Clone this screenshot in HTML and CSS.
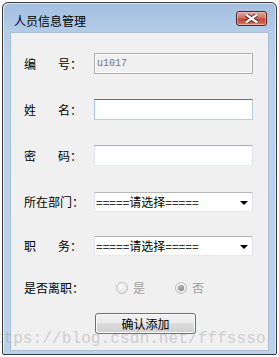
FILE: index.html
```html
<!DOCTYPE html>
<html lang="zh">
<head>
<meta charset="utf-8">
<title>人员信息管理</title>
<link rel="stylesheet" href="styles.css">
</head>
<body>
<div class="window">
  <div class="titlebar">
    <span class="title">人员信息管理</span>
    <button class="close" type="button" aria-label="关闭">
      <svg width="13" height="9" viewBox="0 0 13 9">
        <path d="M1.5 1 L11.5 8 M11.5 1 L1.5 8" stroke="#5a2a2a" stroke-width="4" stroke-linecap="square"/>
        <path d="M1.5 1 L11.5 8 M11.5 1 L1.5 8" stroke="#ffffff" stroke-width="2.2" stroke-linecap="square"/>
      </svg>
    </button>
  </div>
  <div class="client">
    <div class="row r1">
      <label class="lbl two"><span>编</span><span>号：</span></label>
      <div class="field disabled">u1017</div>
    </div>
    <div class="row r2">
      <label class="lbl two"><span>姓</span><span>名：</span></label>
      <div class="field focused"></div>
    </div>
    <div class="row r3">
      <label class="lbl two"><span>密</span><span>码：</span></label>
      <div class="field"></div>
    </div>
    <div class="row r4 sel">
      <label class="lbl">所在部门：</label>
      <div class="select"><span>=====请选择=====</span><i class="arrow"></i></div>
    </div>
    <div class="row r5 sel">
      <label class="lbl two"><span>职</span><span>务：</span></label>
      <div class="select"><span>=====请选择=====</span><i class="arrow"></i></div>
    </div>
    <div class="row r6">
      <label class="lbl">是否离职：</label>
      <div class="radios">
        <span class="radio"><i class="dot"></i>是</span>
        <span class="radio checked"><i class="dot"></i>否</span>
      </div>
    </div>
    <div class="row r7">
      <span class="lbl"></span>
      <button class="btn" type="button">确认添加</button>
    </div>
  </div>
</div>
<div class="watermark">https://blog.csdn.net/fffssso</div>
</body>
</html>
```
FILE: styles.css
```css
* { box-sizing: border-box; }
html, body { margin: 0; padding: 0; background: #ffffff; }
body {
  width: 279px;
  height: 357px;
  overflow: hidden;
  position: relative;
  font-family: "Noto Sans CJK SC", "Noto Sans", sans-serif;
  font-size: 12px;
  color: #000;
}
.window {
  margin: 2px 0 0 2px;
  width: 275px;
  height: 353px;
  border: 1px solid #3a3a3a;
  border-radius: 6px 6px 2px 2px;
  background: linear-gradient(to bottom, #a3bfe0 0px, #b4cce8 30px, #bad2ec 60px, #b9d1ea 100%);
  padding: 0 7px 3px 7px;
  display: flex;
  flex-direction: column;
  box-shadow: inset 1px 1px 0 rgba(255,255,255,0.6), inset -1px 0 0 rgba(255,255,255,0.5);
}
.titlebar {
  height: 29px;
  display: flex;
  align-items: flex-start;
  justify-content: space-between;
}
.title {
  margin: 11px 0 0 4px;
  font-size: 12px;
  line-height: 14px;
  color: #000;
}
.close {
  margin: 8px 2px 0 0;
  width: 31px;
  height: 15px;
  padding: 0;
  border: 1px solid #5b2222;
  border-radius: 3px;
  background: linear-gradient(to bottom, #e6a398 0%, #d47a6c 40%, #c14a39 55%, #c65a47 80%, #dc8d78 100%);
  box-shadow: inset 0 0 0 1px rgba(255,220,210,0.45);
  display: flex;
  align-items: center;
  justify-content: center;
}
.close svg { display: block; }
.client {
  flex: 1;
  background: #f0f0f0;
  border: 1px solid #a9bfd8;
  padding-top: 20px;
  display: flex;
  flex-direction: column;
}
.row {
  display: flex;
  align-items: center;
  height: 21px;
  padding-left: 13px;
}
.row.sel { height: 20px; }
.r2, .r3 { margin-top: 25px; }
.r4 { margin-top: 26px; }
.r5 { margin-top: 24px; }
.r6 { margin-top: 22px; height: 20px; }
.r7 { margin-top: 15px; }
.lbl {
  width: 70px;
  flex: none;
  display: flex;
  line-height: 14px;
  white-space: nowrap;
}
.lbl.two span:first-child { width: 34px; }
.field {
  width: 159px;
  height: 21px;
  background: #fff;
  border: 1px solid #abadb3;
  border-left-color: #e2e3ea;
  border-right-color: #e2e3ea;
  border-bottom-color: #e3e9ef;
}
.field.disabled {
  background: #f0f0f0;
  border: 1px solid #adadad;
  box-shadow: inset 0 0 0 1px #fafafa;
  color: #777777;
  font-family: "Liberation Mono", "DejaVu Sans Mono", monospace;
  font-size: 10px;
  line-height: 19px;
  padding-left: 2px;
}
.field.focused {
  border-color: #3d7bad #b5cfe7 #b5cfe7 #a4c9e3;
}
.select {
  width: 159px;
  height: 20px;
  background: #fff;
  border: 1px solid #abadb3;
  border-color: #b8b8b8 #e2e3ea #e3e9ef #e2e3ea;
  display: flex;
  align-items: center;
  justify-content: space-between;
  padding: 0 4px 0 1px;
  line-height: 14px;
}
.arrow {
  width: 0;
  height: 0;
  border-left: 4px solid transparent;
  border-right: 4px solid transparent;
  border-top: 4px solid #000;
  margin-top: 2px;
}
.radios {
  display: flex;
  padding-left: 22px;
  color: #a0a0a0;
  line-height: 14px;
}
.radio {
  display: flex;
  align-items: center;
  gap: 5px;
  width: 59px;
}
.dot {
  width: 12px;
  height: 12px;
  border-radius: 50%;
  border: 1px solid #c0c0c0;
  background: radial-gradient(circle at 40% 35%, #fafafa 0%, #e6e6e6 70%, #dcdcdc 100%);
  position: relative;
}
.radio.checked .dot::after {
  content: "";
  position: absolute;
  left: 2px;
  top: 2px;
  width: 6px;
  height: 6px;
  border-radius: 50%;
  background: radial-gradient(circle at 40% 35%, #b8b8b8 0%, #8a8a8a 70%, #7a7a7a 100%);
}
.btn {
  margin-left: 1px;
  width: 101px;
  height: 21px;
  padding: 0;
  border: 1px solid #707070;
  border-radius: 3px;
  background: linear-gradient(to bottom, #f2f2f2 0%, #ebebeb 45%, #dddddd 50%, #cfcfcf 100%);
  box-shadow: inset 0 0 0 1px #fcfcfc;
  font-family: "Noto Sans CJK SC", sans-serif;
  font-size: 12px;
  line-height: 14px;
  color: #000;
}
.watermark {
  position: absolute;
  left: -16px;
  top: 329px;
  font-family: "Liberation Mono", "DejaVu Sans Mono", monospace;
  font-size: 16.2px;
  line-height: 20px;
  color: rgba(150, 150, 150, 0.4);
  white-space: nowrap;
  pointer-events: none;
}
```
